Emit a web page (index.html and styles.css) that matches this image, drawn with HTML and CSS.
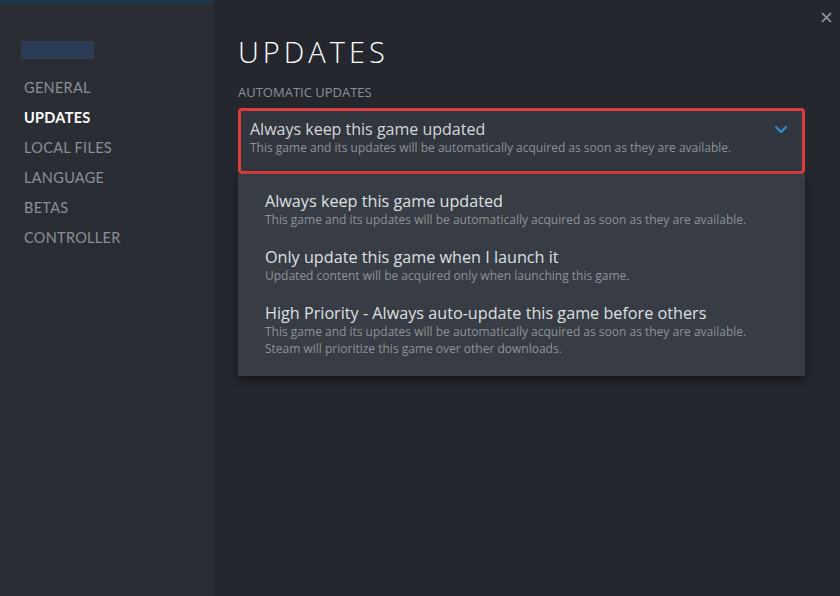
FILE: index.html
```html
<!DOCTYPE html>
<html>
<head>
<meta charset="utf-8">
<link rel="stylesheet" href="styles.css">
</head>
<body>
<div class="app">
  <aside class="sidebar">
    <div class="game-name"></div>
    <nav class="nav">
      <div class="nav-item">GENERAL</div>
      <div class="nav-item active">UPDATES</div>
      <div class="nav-item">LOCAL FILES</div>
      <div class="nav-item">LANGUAGE</div>
      <div class="nav-item">BETAS</div>
      <div class="nav-item">CONTROLLER</div>
    </nav>
  </aside>
  <main class="main">
    <div class="close">
      <svg width="11" height="11" viewBox="0 0 11 11"><path d="M1 1 L10 10 M10 1 L1 10" stroke="#9aa0a8" stroke-width="1.6" fill="none"/></svg>
    </div>
    <h1 class="title">UPDATES</h1>
    <div class="label">AUTOMATIC UPDATES</div>
    <div class="dropdown">
      <div class="select">
        <div class="select-text">
          <div class="opt-title">Always keep this game updated</div>
          <div class="opt-sub">This game and its updates will be automatically acquired as soon as they are available.</div>
        </div>
        <svg class="chevron" width="14" height="9" viewBox="0 0 14 9"><path d="M1.5 1.5 L7 7 L12.5 1.5" stroke="#2e8fd6" stroke-width="2.2" fill="none"/></svg>
      </div>
      <div class="menu">
        <div class="menu-item">
          <div class="opt-title">Always keep this game updated</div>
          <div class="opt-sub">This game and its updates will be automatically acquired as soon as they are available.</div>
        </div>
        <div class="menu-item">
          <div class="opt-title">Only update this game when I launch it</div>
          <div class="opt-sub">Updated content will be acquired only when launching this game.</div>
        </div>
        <div class="menu-item">
          <div class="opt-title">High Priority - Always auto-update this game before others</div>
          <div class="opt-sub">This game and its updates will be automatically acquired as soon as they are available.<br>Steam will prioritize this game over other downloads.</div>
        </div>
      </div>
    </div>
  </main>
</div>
</body>
</html>
```

FILE: styles.css
```css
* { box-sizing: border-box; }
html, body { margin: 0; padding: 0; }
body {
  width: 840px;
  height: 596px;
  overflow: hidden;
  background: #24272e;
  font-family: "Open Sans", "Noto Sans", sans-serif;
}
.app {
  display: flex;
  height: 596px;
  position: relative;
}
.app::before {
  content: "";
  position: absolute;
  left: 0; right: 0; top: 0;
  height: 6px;
  background: linear-gradient(#1a3d57, rgba(36,39,46,0));
  pointer-events: none;
}
.sidebar {
  width: 214px;
  flex: none;
  background: #2a2d34;
  padding: 41px 0 0 21px;
}
.game-name {
  width: 73px;
  height: 18px;
  background: #2c3d55;
}
.nav {
  margin-top: 17px;
  padding-left: 3px;
  display: flex;
  flex-direction: column;
}
.nav-item {
  height: 30px;
  line-height: 24px;
  font-family: "Lato", "Open Sans", sans-serif;
  font-size: 14.5px;
  letter-spacing: 0.3px;
  color: #8a8f97;
}
.nav-item.active {
  color: #ffffff;
  font-weight: bold;
}
.main {
  flex: 1;
  position: relative;
  padding: 32px 36px 0 24px;
  background: #24272e;
}
.close {
  position: absolute;
  right: 9px;
  top: 6px;
}
.title {
  margin: 0;
  font-weight: 300;
  font-size: 29px;
  line-height: 40px;
  letter-spacing: 4px;
  color: #ffffff;
}
.label {
  margin-top: 11px;
  font-size: 13px;
  line-height: 18px;
  color: #8b9099;
}
.dropdown {
  margin-top: 7px;
  width: 567px;
}
.select {
  height: 66px;
  border: 3px solid #dd3b3d;
  border-radius: 4px;
  background: #32363e;
  padding: 9px 14px 0 9px;
  display: flex;
  justify-content: space-between;
  align-items: flex-start;
}
.chevron {
  margin-top: 5px;
}
.opt-title {
  font-size: 16px;
  line-height: 19px;
  color: #d4d7db;
}
.opt-sub {
  font-size: 12px;
  line-height: 17px;
  color: #8d929a;
}
.menu {
  background: #383c44;
  padding: 18px 0 19px 27px;
  box-shadow: 0 4px 8px rgba(0,0,0,0.45);
  display: flex;
  flex-direction: column;
  gap: 20px;
}
.menu-item .opt-title {
  font-size: 16.2px;
  line-height: 19px;
  color: #dde0e3;
}
```
